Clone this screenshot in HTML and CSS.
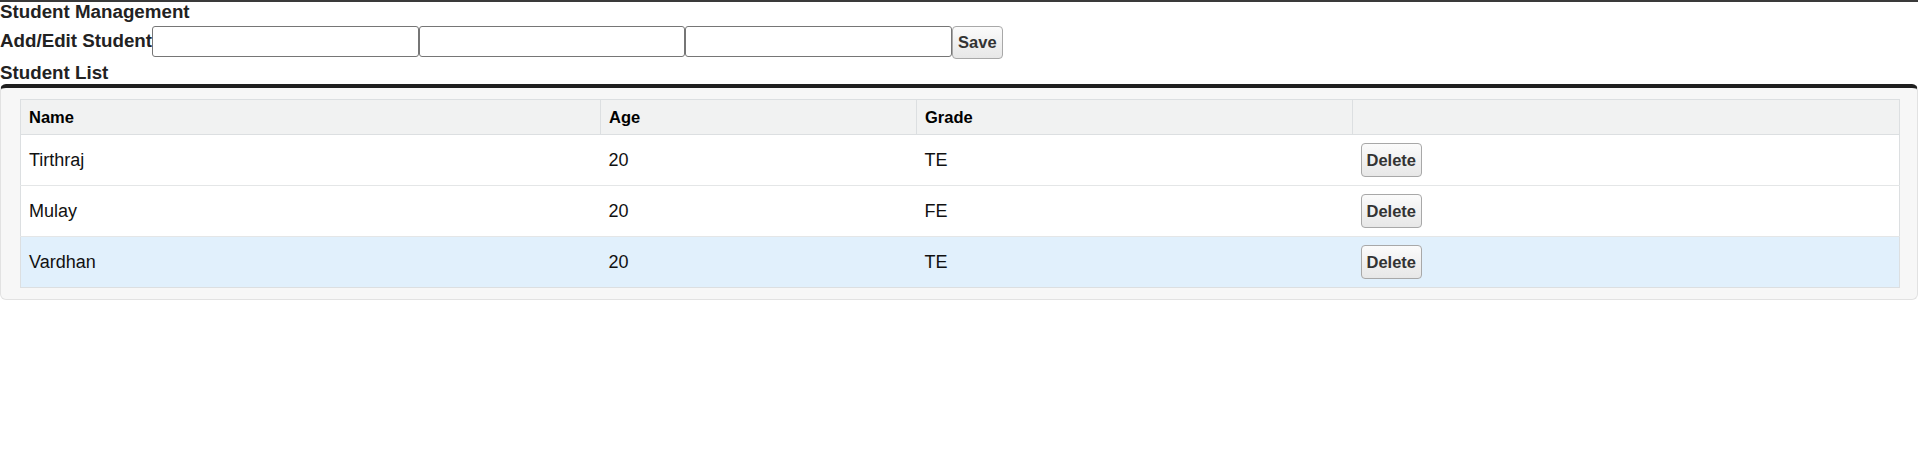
FILE: index.html
```html
<!DOCTYPE html>
<html lang="en">
<head>
<meta charset="utf-8">
<title>Student Management</title>
<link rel="stylesheet" href="styles.css">
</head>
<body>
<div class="app">
  <h1 class="title">Student Management</h1>
  <form class="editor">
    <label class="editor-label">Add/Edit Student</label><input class="field" type="text"><input class="field" type="text"><input class="field" type="text"><button class="btn btn-save" type="button">Save</button>
  </form>
  <h2 class="list-title">Student List</h2>
  <div class="panel">
    <table class="grid">
      <colgroup>
        <col class="c-name"><col class="c-age"><col class="c-grade"><col class="c-act">
      </colgroup>
      <thead>
        <tr><th>Name</th><th>Age</th><th>Grade</th><th></th></tr>
      </thead>
      <tbody>
        <tr><td>Tirthraj</td><td>20</td><td>TE</td><td><button class="btn btn-del" type="button">Delete</button></td></tr>
        <tr><td>Mulay</td><td>20</td><td>FE</td><td><button class="btn btn-del" type="button">Delete</button></td></tr>
        <tr class="selected"><td>Vardhan</td><td>20</td><td>TE</td><td><button class="btn btn-del" type="button">Delete</button></td></tr>
      </tbody>
    </table>
  </div>
</div>
</body>
</html>
```

FILE: styles.css
```css
* { box-sizing: border-box; }

html, body {
  margin: 0;
  padding: 0;
  background: #ffffff;
}

body {
  font-family: "Liberation Sans", Arial, sans-serif;
  color: #111;
}

.app {
  border-top: 2px solid #3a3a3a;
}

.title {
  margin: 0;
  font-size: 18.75px;
  line-height: 20px;
  font-weight: bold;
  color: #222;
}

.editor {
  display: flex;
  align-items: flex-start;
  margin: 4px 0 0 0;
}

.editor-label {
  font-size: 18.75px;
  line-height: 22px;
  font-weight: bold;
  color: #222;
  margin-top: 3.5px;
  width: 152px;
  white-space: nowrap;
}

.field {
  width: 266.7px;
  height: 31px;
  margin: 0;
  padding: 2px 4px;
  border: 1px solid #767676;
  border-radius: 3px;
  background: #fff;
  font-family: "Liberation Sans", Arial, sans-serif;
  font-size: 20px;
}

.btn {
  font-family: "Liberation Sans", Arial, sans-serif;
  font-size: 16.5px;
  line-height: 19px;
  font-weight: bold;
  color: #333;
  background: linear-gradient(#fbfbfb, #e7e7e7);
  border: 1px solid #a8a8a8;
  border-radius: 4px;
  margin: 0;
}

.btn-save {
  padding: 6px 5px;
  height: 33px;
}

.list-title {
  margin: 2.5px 0 0 0;
  font-size: 18.75px;
  line-height: 22px;
  font-weight: bold;
  color: #222;
}

.panel {
  margin-top: 0.5px;
  background: #f7f7f7;
  border: 1px solid #e2e2e2;
  border-top: 4px solid #1f1f1f;
  border-radius: 6px;
  padding: 11px 17px 11px 19px;
}

.grid {
  width: 100%;
  table-layout: fixed;
  border-collapse: collapse;
  border: 1px solid #dcdfe1;
  background: #fff;
}

.c-name { width: 580px; }
.c-age { width: 316px; }
.c-grade { width: 436px; }
.c-act { width: auto; }

.grid th {
  background: #f1f2f2;
  text-align: left;
  font-size: 16.5px;
  line-height: 19px;
  font-weight: bold;
  color: #000;
  padding: 8px 8px 7px 8px;
  border-bottom: 1px solid #dcdfe1;
  border-left: 1px solid #dcdfe1;
}

.grid th:first-child { border-left: none; }

.grid td {
  font-size: 18px;
  line-height: 21px;
  color: #111;
  padding: 8px 8px;
  vertical-align: middle;
  border-top: 1px solid #e4e6e7;
}

.grid tr.selected td {
  background: #e1f0fc;
}

.btn-del {
  padding: 6.5px 5px;
  height: 34px;
  display: block;
}
```
